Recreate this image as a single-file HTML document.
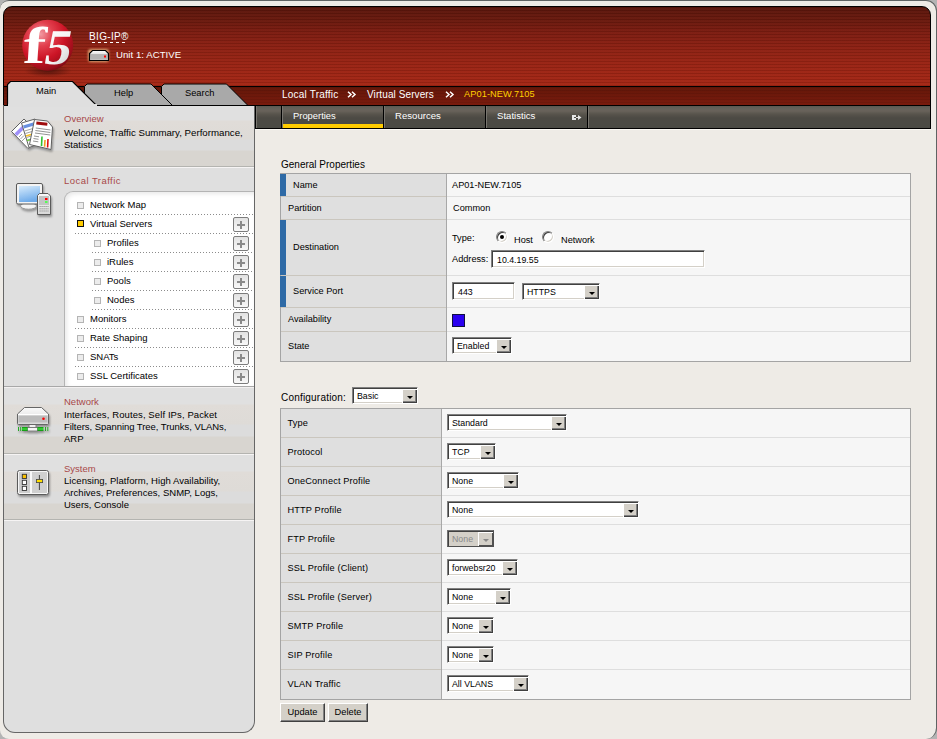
<!DOCTYPE html>
<html><head><meta charset="utf-8">
<style>
*{box-sizing:border-box;margin:0;padding:0}
html,body{width:937px;height:739px;overflow:hidden;background:#b4b4b4}
body{position:relative;font-family:"Liberation Sans",sans-serif;font-size:10px;color:#000}
.a{position:absolute}
.t{position:absolute;white-space:nowrap;line-height:12px}
#win{position:absolute;left:0;top:0;width:937px;height:739px;background:#eeebe6;border-top:1px solid #5f6363;border-right:1px solid #5f6363;border-radius:9px 11px 11px 9px}
#hdr{position:absolute;left:3px;top:6px;width:928px;height:123px;border:1px solid #000;border-radius:9px 9px 0 0;overflow:hidden;
 background:linear-gradient(#5a150b 0px,#6c190d 15px,#7c1c10 25px,#8c2012 40px,#982313 55px,#a52614 79px)}
#hdr .stripes{position:absolute;left:0;top:0;right:0;height:79px;background:repeating-linear-gradient(rgba(0,0,0,0.1) 0px,rgba(0,0,0,0.1) 1px,rgba(255,255,255,0.02) 1px,rgba(255,255,255,0.02) 3px)}
#band{position:absolute;left:0;top:79px;right:0;height:20px;border-top:1px solid #000;background:linear-gradient(#641709,#7a1b0e)}
#band .stripes2{position:absolute;left:0;top:0;right:0;bottom:0;background:repeating-linear-gradient(rgba(0,0,0,0.08) 0px,rgba(0,0,0,0.08) 1px,rgba(255,255,255,0) 1px,rgba(255,255,255,0) 3px)}
#gbar{position:absolute;left:0;top:98px;right:0;height:23px;border-top:1px solid #000;background:linear-gradient(#6b6760 0px,#625f58 5px,#4f4e48 9px,#4a4a44 22px)}
#side{position:absolute;left:3px;top:105px;width:252px;height:628px;background:#dfdfdf;border:1px solid #666;border-top:none;border-radius:0 0 12px 12px;overflow:hidden}
.plus{position:absolute;width:16px;height:15px;border:1px solid #7c7c7c;border-radius:2px;background:linear-gradient(#e2e2e2,#f8f8f8)}
.plus:before{content:"";position:absolute;left:3px;top:6px;width:8px;height:2px;background:#8a8a8a}
.plus:after{content:"";position:absolute;left:6px;top:3px;width:2px;height:8px;background:#8a8a8a}
.dot{position:absolute;height:1px;background:repeating-linear-gradient(90deg,#8c8c8c 0 1px,transparent 1px 3px)}
.sel,.inp{position:absolute;background:#fff;border:1px solid;border-color:#808080 #fff #fff #808080;box-shadow:inset 1px 1px 0 #404040,inset -1px -1px 0 #d4d0c8}
.sel span,.inp span{position:absolute;left:4px;top:2.5px;line-height:13px;white-space:nowrap}
.sel span{top:2px}
.inp span{left:5px}
.sel i{position:absolute;right:0;top:1px;bottom:0;width:15px;background:#d4d0c8;box-shadow:inset 1px 1px 0 #fff,inset -1px -1px 0 #404040,inset -2px -2px 0 #808080}
.sel i:after{content:"";position:absolute;left:4.5px;top:6.5px;border-left:3px solid transparent;border-right:3px solid transparent;border-top:3.5px solid #000}
.sel.dis{background:#d4d0c8;border-color:#707070 #505050 #505050 #707070;box-shadow:inset 1px 1px 0 #404040}
.sel.dis i{box-shadow:inset 1px 1px 0 #fff,inset -1px -1px 0 #505050}
.sel.dis span{color:#8a8a8a}
.sel.dis i:after{border-top-color:#8a8a8a}
.radio{position:absolute;width:12px;height:12px;border-radius:50%;background:#fff;border:1px solid;border-color:#808080 #fff #fff #808080;box-shadow:inset 1px 1px 0 #404040,inset -1px -1px 0 #d4d0c8}
.radio.on:after{content:"";position:absolute;left:3px;top:3px;width:4px;height:4px;border-radius:50%;background:#000}
.btn{position:absolute;height:19px;background:#d4d0c8;border:1px solid;border-color:#fff #404040 #404040 #fff;box-shadow:inset -1px -1px 0 #808080}
.btn span{position:absolute;left:0;right:0;top:2px;text-align:center;font-size:9.3px;line-height:12px}
</style></head><body>
<div id="win"></div>
<div id="hdr">
 <div class="stripes"></div>
 <div id="band"><div class="stripes2"></div></div>
 <div id="gbar"></div>
</div>
<div id="side"></div>


<!-- sidebar sections -->
<div class="a" style="left:4px;top:106px;width:250px;height:60px;background:linear-gradient(#e0e0e0 0px,#e0e0e0 14px,#e0dcd8 15px,#dedbd7 33px,#dcdcdc 34px,#dcdcdc 44px,#d8d5d0 45px,#d8d5d0 60px)"></div>
<div class="a" style="left:4px;top:166px;width:250px;height:1px;background:#b4b4b0"></div>
<div class="a" style="left:4px;top:167px;width:250px;height:1px;background:#f6f4f4"></div>
<div class="a" style="left:4px;top:386px;width:250px;height:1px;background:#a8a8a8"></div>
<div class="a" style="left:4px;top:387px;width:250px;height:1px;background:#f2f0f0"></div>
<div class="a" style="left:4px;top:388px;width:250px;height:65px;background:linear-gradient(#e0e0e0 0px,#e0e0e0 16px,#e0dcd8 17px,#dedbd7 36px,#dcdcdc 37px,#dcdcdc 48px,#d8d5d0 49px,#d8d5d0 65px)"></div>
<div class="a" style="left:4px;top:453px;width:250px;height:1px;background:#b4b4b0"></div>
<div class="a" style="left:4px;top:454px;width:250px;height:1px;background:#f6f4f4"></div>
<div class="a" style="left:4px;top:455px;width:250px;height:64px;background:linear-gradient(#e0e0e0 0px,#e0e0e0 16px,#e0dcd8 17px,#dedbd7 36px,#dcdcdc 37px,#dcdcdc 48px,#d8d5d0 49px,#d8d5d0 64px)"></div>
<div class="a" style="left:4px;top:519px;width:250px;height:1px;background:#b4b4b0"></div>
<div class="a" style="left:4px;top:520px;width:250px;height:1px;background:#f6f4f4"></div>

<div class="t" style="left:64px;top:113px;font-size:9.5px;color:#a84848">Overview</div>
<div class="t" style="left:64px;top:127px;font-size:9.7px">Welcome, Traffic Summary, Performance,</div>
<div class="t" style="left:64px;top:139px;font-size:9.5px">Statistics</div>

<div class="t" style="left:64px;top:175px;font-size:9.5px;color:#a84848;letter-spacing:0.45px">Local Traffic</div>
<div class="a" style="left:64px;top:191px;width:190px;height:195px;background:#fff;border-top:1px solid #b4b4b4;border-left:1px solid #b4b4b4;border-radius:9px 0 0 0;box-shadow:inset 2px 2px 4px rgba(0,0,0,0.09)"></div>

<div class="t" style="left:64px;top:396px;font-size:9.5px;color:#a84848">Network</div>
<div class="t" style="left:64px;top:409px;font-size:9.5px;letter-spacing:0.1px">Interfaces, Routes, Self IPs, Packet</div>
<div class="t" style="left:64px;top:421px;font-size:9.5px;letter-spacing:-0.05px">Filters, Spanning Tree, Trunks, VLANs,</div>
<div class="t" style="left:64px;top:433px;font-size:9.5px">ARP</div>

<div class="t" style="left:64px;top:463px;font-size:9.5px;color:#a84848">System</div>
<div class="t" style="left:64px;top:475px;font-size:9.5px;letter-spacing:0.05px">Licensing, Platform, High Availability,</div>
<div class="t" style="left:64px;top:487px;font-size:9.5px;letter-spacing:0.03px">Archives, Preferences, SNMP, Logs,</div>
<div class="t" style="left:64px;top:499px;font-size:9.5px">Users, Console</div>
<div class="a" style="left:77px;top:202px;width:7px;height:7px;border:1px solid #b4b4b4;background:#ececec"></div>
<div class="t" style="left:90px;top:199px;font-size:9.5px">Network Map</div>
<div class="dot" style="left:75px;top:214px;width:178px"></div>
<div class="a" style="left:77px;top:220px;width:7px;height:7px;border:1px solid #111;background:#ffcc00"></div>
<div class="t" style="left:90px;top:218px;font-size:9.5px">Virtual Servers</div>
<div class="plus" style="left:233px;top:217px"></div>
<div class="dot" style="left:75px;top:233px;width:178px"></div>
<div class="a" style="left:94px;top:240px;width:7px;height:7px;border:1px solid #b4b4b4;background:#ececec"></div>
<div class="t" style="left:107px;top:237px;font-size:9.5px">Profiles</div>
<div class="plus" style="left:233px;top:236px"></div>
<div class="dot" style="left:92px;top:252px;width:161px"></div>
<div class="a" style="left:94px;top:259px;width:7px;height:7px;border:1px solid #b4b4b4;background:#ececec"></div>
<div class="t" style="left:107px;top:256px;font-size:9.5px">iRules</div>
<div class="plus" style="left:233px;top:255px"></div>
<div class="dot" style="left:92px;top:271px;width:161px"></div>
<div class="a" style="left:94px;top:278px;width:7px;height:7px;border:1px solid #b4b4b4;background:#ececec"></div>
<div class="t" style="left:107px;top:275px;font-size:9.5px">Pools</div>
<div class="plus" style="left:233px;top:274px"></div>
<div class="dot" style="left:92px;top:290px;width:161px"></div>
<div class="a" style="left:94px;top:297px;width:7px;height:7px;border:1px solid #b4b4b4;background:#ececec"></div>
<div class="t" style="left:107px;top:294px;font-size:9.5px">Nodes</div>
<div class="plus" style="left:233px;top:293px"></div>
<div class="dot" style="left:92px;top:309px;width:161px"></div>
<div class="a" style="left:77px;top:316px;width:7px;height:7px;border:1px solid #b4b4b4;background:#ececec"></div>
<div class="t" style="left:90px;top:313px;font-size:9.5px">Monitors</div>
<div class="plus" style="left:233px;top:312px"></div>
<div class="dot" style="left:75px;top:328px;width:178px"></div>
<div class="a" style="left:77px;top:335px;width:7px;height:7px;border:1px solid #b4b4b4;background:#ececec"></div>
<div class="t" style="left:90px;top:332px;font-size:9.5px">Rate Shaping</div>
<div class="plus" style="left:233px;top:331px"></div>
<div class="dot" style="left:75px;top:347px;width:178px"></div>
<div class="a" style="left:77px;top:354px;width:7px;height:7px;border:1px solid #b4b4b4;background:#ececec"></div>
<div class="t" style="left:90px;top:351px;font-size:9.5px">SNATs</div>
<div class="plus" style="left:233px;top:350px"></div>
<div class="dot" style="left:75px;top:366px;width:178px"></div>
<div class="a" style="left:77px;top:373px;width:7px;height:7px;border:1px solid #b4b4b4;background:#ececec"></div>
<div class="t" style="left:90px;top:370px;font-size:9.5px">SSL Certificates</div>
<div class="plus" style="left:233px;top:369px"></div>


<!-- sidebar icons -->
<svg class="a" style="left:0;top:0" width="60" height="520" viewBox="0 0 60 520">
 <defs>
  <filter id="ds" x="-30%" y="-30%" width="160%" height="160%"><feGaussianBlur in="SourceAlpha" stdDeviation="1.2"/><feOffset dx="1" dy="1.5"/><feComponentTransfer><feFuncA type="linear" slope="0.35"/></feComponentTransfer><feMerge><feMergeNode/><feMergeNode in="SourceGraphic"/></feMerge></filter>
  <linearGradient id="scr" x1="0" y1="0" x2="0.3" y2="1"><stop offset="0" stop-color="#d8ecfc"/><stop offset="1" stop-color="#70acea"/></linearGradient>
  <linearGradient id="gry" x1="0" y1="0" x2="0" y2="1"><stop offset="0" stop-color="#fafafa"/><stop offset="1" stop-color="#d8d8d8"/></linearGradient>
  <linearGradient id="grn" x1="0" y1="0" x2="0" y2="1"><stop offset="0" stop-color="#0a8a0a"/><stop offset="0.5" stop-color="#40e040"/><stop offset="1" stop-color="#0a8a0a"/></linearGradient>
 </defs>
 <!-- overview -->
 <g filter="url(#ds)">
  <path d="M11.5 131.5 L24 119 L41 136 L28 148.5 Z" fill="#fff" stroke="#606060" stroke-width="1"/>
  <path d="M14.5 133.5 L23 125 L25.5 127.5 L17 136 Z" fill="#a090f8"/>
  <path d="M19 137 L22 134 M20.5 139 L24 135.5 M22 141 L25.5 137.5" stroke="#888" stroke-width="0.8"/>
  <path d="M21.5 123 L35 119 L42.5 143 L29 147.5 Z" fill="#fff" stroke="#606060" stroke-width="1"/>
  <path d="M23 125.5 L34 122.2 L35 125.2 L24 128.5 Z" fill="#6890e0"/>
  <path d="M24.5 131 L33 128.5 M25.2 133.5 L33.8 131 M26.5 137.5 L31 136 M27.5 141 L30.5 140" stroke="#999" stroke-width="0.9"/>
  <path d="M26 136 L31 134.5" stroke="#f8c020" stroke-width="1.4"/>
  <path d="M27 140.5 L30 139.5" stroke="#70d040" stroke-width="1.4"/>
  <path d="M34.5 119.5 L47.5 121 L52.5 127 L51 149.5 L29.5 144.5 Z" fill="#fff" stroke="#606060" stroke-width="1"/>
  <path d="M36.5 121.5 L47.5 122.8 L47.2 125.8 L36.2 124.5 Z" fill="#a01010"/>
  <path d="M35.8 128 L50.5 130 M35.4 130.5 L50.4 132.5 M35 133 L50.3 135 M34 136 L39 136.8 M33.5 138.5 L38.5 139.3 M33 141 L38.3 141.8" stroke="#777" stroke-width="0.8"/>
  <path d="M42 136.5 L41.5 146" stroke="#30c030" stroke-width="1.6"/>
  <path d="M45 140 L44.6 146.8" stroke="#f0a020" stroke-width="1.6"/>
  <path d="M48 139 L47.6 147.5" stroke="#e01010" stroke-width="1.6"/>
 </g>
 <!-- local traffic -->
 <g filter="url(#ds)">
  <ellipse cx="28.5" cy="206" rx="8" ry="3.2" fill="#f4f4f4" stroke="#888" stroke-width="0.8"/>
  <rect x="16.5" y="183.5" width="26" height="20.5" rx="1.5" fill="#f4f4f4" stroke="#5a5a5a" stroke-width="1"/>
  <rect x="19" y="186" width="21" height="16" fill="url(#scr)"/>
  <path d="M39.5 193.5 H48 L50.5 196 V214.5 H37.5 V195.5 Z" fill="url(#gry)" stroke="#5a5a5a" stroke-width="1"/>
  <rect x="39" y="196" width="10" height="9" fill="#c4c4c4"/>
  <rect x="45" y="198" width="2.5" height="2" fill="#f00"/>
  <rect x="45" y="201" width="2.5" height="2" fill="#5f5"/>
  <path d="M39.5 206.5 H48.5 M39.5 208.8 H48.5 M39.5 211 H48.5" stroke="#777" stroke-width="0.8" stroke-dasharray="1.2 0.8"/>
 </g>
 <!-- network -->
 <g filter="url(#ds)">
  <rect x="29" y="423" width="7" height="5" fill="#f0f0f0" stroke="#666" stroke-width="0.8"/>
  <rect x="27.5" y="427.5" width="10" height="3.5" fill="#f4f4f4" stroke="#666" stroke-width="0.8"/>
  <path d="M24.5 407.5 H41.5 L48.5 414 V423.5 Q48.5 424.5 47.5 424.5 H18.5 Q17.5 424.5 17.5 423.5 V414 Z" fill="url(#gry)" stroke="#666" stroke-width="1"/>
  <rect x="18.5" y="415.5" width="29" height="7" fill="#bcbcbc"/>
  <path d="M18 414.5 H48" stroke="#fff" stroke-width="1"/>
  <circle cx="43.5" cy="418.8" r="1.3" fill="#f00"/>
  <rect x="22" y="427" width="5.5" height="4" fill="url(#grn)"/>
  <rect x="37.5" y="427" width="6" height="4" fill="url(#grn)"/>
  <rect x="18" y="427" width="1" height="4" fill="#2a2"/>
  <rect x="20.2" y="427" width="1" height="4" fill="#2a2"/>
  <rect x="45" y="427" width="1" height="4" fill="#2a2"/>
  <rect x="47.3" y="427" width="1" height="4" fill="#2a2"/>
 </g>
 <!-- system -->
 <g filter="url(#ds)">
  <rect x="17.5" y="470.5" width="31" height="24" rx="2" fill="#f6f6f6" stroke="#5a5a5a" stroke-width="1"/>
  <rect x="19" y="472" width="11" height="21" fill="#cdcdcd"/>
  <rect x="32" y="472" width="15" height="21" fill="#d0d0d0"/>
  <path d="M31 471 V494" stroke="#f8f8f8" stroke-width="1.5"/>
  <rect x="22.3" y="474.3" width="4.2" height="4.2" fill="#f8c000" stroke="#333" stroke-width="0.9"/>
  <rect x="22.3" y="480.3" width="4.2" height="4.2" fill="#fff" stroke="#333" stroke-width="0.9"/>
  <rect x="22.3" y="486.3" width="4.2" height="4.2" fill="#fff" stroke="#333" stroke-width="0.9"/>
  <path d="M39.4 475 V490" stroke="#333" stroke-width="0.9"/>
  <rect x="36.4" y="479.4" width="6.2" height="3.2" fill="#ffe000" stroke="#444" stroke-width="0.8"/>
 </g>
</svg>

<!-- logo -->
<svg class="a" style="left:14px;top:14px" width="66" height="66" viewBox="0 0 66 66">
 <defs>
  <radialGradient id="lg" cx="0.36" cy="0.28" r="0.78">
   <stop offset="0" stop-color="#f29aa2"/>
   <stop offset="0.3" stop-color="#e2404e"/>
   <stop offset="0.62" stop-color="#cc1426"/>
   <stop offset="0.9" stop-color="#9a0e1a"/>
   <stop offset="1" stop-color="#700a12"/>
  </radialGradient>
  <linearGradient id="g5" x1="0" y1="0" x2="1" y2="1"><stop offset="0" stop-color="#fff"/><stop offset="0.55" stop-color="#f4f4f4"/><stop offset="1" stop-color="#c8c8c8"/></linearGradient>
  <radialGradient id="sh" cx="0.5" cy="0.5" r="0.5">
   <stop offset="0" stop-color="#000" stop-opacity="0.45"/>
   <stop offset="1" stop-color="#000" stop-opacity="0"/>
  </radialGradient>
 </defs>
 <ellipse cx="34" cy="57" rx="24" ry="6" fill="url(#sh)"/>
 <circle cx="33.7" cy="31.3" r="25.5" fill="url(#lg)"/>
 <text x="0" y="0" font-family="Liberation Serif" font-weight="bold" font-size="52" fill="#fff" transform="translate(8.5,49) scale(1.3,1) skewX(-3)">f</text><text x="0" y="0" font-family="Liberation Serif" font-weight="bold" font-size="50" fill="url(#g5)" transform="translate(28.5,49.5) scale(1.05,1) skewX(-11)">5</text>
</svg>
<div class="t" style="left:89px;top:31px;color:#fff;font-size:10px;letter-spacing:0.35px">BIG-IP&reg;</div>
<div class="a" style="left:92px;top:42px;width:36px;height:1px;background:repeating-linear-gradient(90deg,#fff 0 3px,transparent 3px 6px)"></div>
<svg class="a" style="left:86px;top:47px" width="26" height="17" viewBox="0 0 26 17">
 <defs><linearGradient id="sv" x1="0" y1="0" x2="0" y2="1"><stop offset="0" stop-color="#fff"/><stop offset="0.3" stop-color="#e8e8e8"/><stop offset="0.4" stop-color="#b8b8b8"/><stop offset="1" stop-color="#d0d0d0"/></linearGradient>
 <filter id="gl"><feGaussianBlur stdDeviation="1.2"/></filter></defs>
 <rect x="2" y="2" width="21" height="13" rx="3" fill="#f3c48a" opacity="0.8" filter="url(#gl)"/>
 <path d="M6.5 3.5 H19.5 L22.5 6.5 V13.5 H3.5 V6.5 Z" fill="url(#sv)" stroke="#000" stroke-width="1.2"/>
 <rect x="5" y="7.5" width="16" height="5" fill="#b4b4b4"/>
 <rect x="18" y="8.5" width="2" height="2" fill="#f00"/>
</svg>
<div class="t" style="left:116px;top:49px;color:#fff;font-size:9.6px;letter-spacing:0.05px">Unit 1: ACTIVE</div>

<!-- tabs -->
<svg class="a" style="left:0;top:78px" width="260" height="30" viewBox="0 78 260 30">
 <path d="M161.5 105 V86.5 L164 84 H226.5 L247.5 105" fill="#a9a9a9" stroke="#000" stroke-width="1"/>
 <path d="M84.5 105 V86.5 L87 84 H151 L172 105" fill="#a9a9a9" stroke="#000" stroke-width="1"/>
 <path d="M7.5 106 V84.5 L10.5 81.5 H72.5 L96.5 105.5 H260" fill="#dfdfdf" stroke="#000" stroke-width="1.2"/>
 <rect x="8" y="104" width="89" height="3" fill="#dfdfdf"/>
 <rect x="4" y="105" width="3.5" height="1" fill="#000"/>
</svg>
<div class="t" style="left:36px;top:85px;font-size:9.3px">Main</div>
<div class="t" style="left:114px;top:87px;font-size:9.3px">Help</div>
<div class="t" style="left:185px;top:87px;font-size:9.3px">Search</div>

<!-- breadcrumb -->
<div class="t" style="left:282px;top:89px;color:#fff;font-size:10px;letter-spacing:0.2px">Local Traffic</div>
<svg class="a" style="left:347px;top:91px" width="10" height="8" viewBox="0 0 10 8"><path d="M1 0.8 L4 3.5 L1 6.2 M5 0.8 L8 3.5 L5 6.2" fill="none" stroke="#fff" stroke-width="1.5"/></svg>
<div class="t" style="left:367px;top:89px;color:#fff;font-size:10px;letter-spacing:0.1px">Virtual Servers</div>
<svg class="a" style="left:445px;top:91px" width="10" height="8" viewBox="0 0 10 8"><path d="M1 0.8 L4 3.5 L1 6.2 M5 0.8 L8 3.5 L5 6.2" fill="none" stroke="#fff" stroke-width="1.5"/></svg>
<div class="t" style="left:464px;top:88px;color:#ffd000;font-size:9.2px;letter-spacing:0.1px">AP01-NEW.7105</div>

<!-- gray bar tabs -->
<div class="a" style="left:255px;top:105px;width:676px;height:24px;border:1px solid #000;background:linear-gradient(#58574f 0px,#605e57 1px,#65625b 3px,#69625a 5px,#5d5951 7px,#55514a 9px,#4c4a44 12px,#4a4a44 22px)"></div>
<div class="a" style="left:255px;top:129px;width:676px;height:1px;background:#faf8f4"></div>
<div class="a" style="left:256px;top:106px;width:1px;height:22px;background:#77746e"></div>
<div class="a" style="left:281px;top:106px;width:1px;height:22px;background:#000"></div>
<div class="a" style="left:282px;top:106px;width:1px;height:22px;background:#77746e"></div>
<div class="a" style="left:383px;top:106px;width:1px;height:22px;background:#000"></div>
<div class="a" style="left:384px;top:106px;width:1px;height:22px;background:#77746e"></div>
<div class="a" style="left:485px;top:106px;width:1px;height:22px;background:#000"></div>
<div class="a" style="left:486px;top:106px;width:1px;height:22px;background:#77746e"></div>
<div class="a" style="left:587px;top:106px;width:1px;height:22px;background:#000"></div>
<div class="a" style="left:588px;top:106px;width:1px;height:22px;background:#77746e"></div>
<div class="a" style="left:283px;top:124px;width:100px;height:4px;background:#ffcc00"></div>
<div class="t" style="left:293px;top:110px;color:#fff;font-size:9.4px">Properties</div>
<div class="t" style="left:395px;top:110px;color:#fff;font-size:9.6px">Resources</div>
<div class="t" style="left:497px;top:110px;color:#fff;font-size:9.6px">Statistics</div>
<svg class="a" style="left:571px;top:114px" width="11" height="7" viewBox="0 0 11 7"><rect x="1" y="1" width="4" height="5" fill="#e6e6e6"/><rect x="3" y="3" width="2" height="1" fill="#4e4c46"/><rect x="5" y="3" width="2.5" height="1" fill="#e6e6e6"/><path d="M7 1 L10.5 3.5 L7 6 Z" fill="#e6e6e6"/></svg>

<!--MAIN-->
<div class="t" style="left:281px;top:158.99px;font-size:10px">General Properties</div>
<div class="a" style="left:280px;top:173px;width:631px;height:189px;background:#f6f6f6;border:1px solid #a4a4a4"></div>
<div class="a" style="left:281px;top:174px;width:165px;height:187px;background:#dfdfdf"></div>
<div class="a" style="left:446px;top:174px;width:1px;height:187px;background:#a8a8a8"></div>
<div class="a" style="left:281px;top:196px;width:165px;height:1px;background:#cac6be"></div>
<div class="a" style="left:447px;top:196px;width:463px;height:1px;background:#dedede"></div>
<div class="a" style="left:281px;top:219px;width:165px;height:1px;background:#cac6be"></div>
<div class="a" style="left:447px;top:219px;width:463px;height:1px;background:#dedede"></div>
<div class="a" style="left:281px;top:275px;width:165px;height:1px;background:#cac6be"></div>
<div class="a" style="left:447px;top:275px;width:463px;height:1px;background:#dedede"></div>
<div class="a" style="left:281px;top:307px;width:165px;height:1px;background:#cac6be"></div>
<div class="a" style="left:447px;top:307px;width:463px;height:1px;background:#dedede"></div>
<div class="a" style="left:281px;top:331px;width:165px;height:1px;background:#cac6be"></div>
<div class="a" style="left:447px;top:331px;width:463px;height:1px;background:#dedede"></div>
<div class="a" style="left:280px;top:174px;width:6px;height:22px;background:#2e6aa6"></div>
<div class="a" style="left:280px;top:220px;width:6px;height:55px;background:#2e6aa6"></div>
<div class="a" style="left:280px;top:276px;width:6px;height:31px;background:#2e6aa6"></div>
<div class="t" style="left:293px;top:178.67px;font-size:9.2px">Name</div>
<div class="t" style="left:288px;top:201.67px;font-size:9.2px">Partition</div>
<div class="t" style="left:293px;top:240.67px;font-size:9.2px">Destination</div>
<div class="t" style="left:293px;top:284.67px;font-size:9.2px">Service Port</div>
<div class="t" style="left:288px;top:312.67px;font-size:9.2px">Availability</div>
<div class="t" style="left:288px;top:339.67px;font-size:9.2px">State</div>
<div class="t" style="left:452px;top:178.67px;font-size:9.2px">AP01-NEW.7105</div>
<div class="t" style="left:453px;top:201.67px;font-size:9.2px">Common</div>
<div class="t" style="left:452px;top:231.67px;font-size:9.2px">Type:</div>
<div class="radio on" style="left:496px;top:231px"></div>
<div class="t" style="left:514px;top:233.67px;font-size:9.2px">Host</div>
<div class="radio" style="left:542px;top:231px"></div>
<div class="t" style="left:561px;top:233.67px;font-size:9.2px">Network</div>
<div class="t" style="left:452px;top:252.67px;font-size:9.2px">Address:</div>
<div class="inp" style="left:491px;top:250px;width:214px;height:18px"><span style="font-size:8.8px">10.4.19.55</span></div>
<div class="inp" style="left:452px;top:282px;width:63px;height:18px"><span style="font-size:8.8px">443</span></div>
<div class="sel" style="left:522px;top:283px;width:78px;height:17px"><span style="font-size:8.8px">HTTPS</span><i></i></div>
<div class="a" style="left:452px;top:314px;width:13px;height:13px;background:#2a00f0;border:1px solid #101040"></div>
<div class="sel" style="left:452px;top:337px;width:60px;height:17px"><span style="font-size:8.8px">Enabled</span><i></i></div>
<div class="t" style="left:281px;top:391.99px;font-size:10px;letter-spacing:0.2px">Configuration:</div>
<div class="sel" style="left:352px;top:387px;width:66px;height:17px"><span style="font-size:8.8px">Basic</span><i></i></div>
<div class="a" style="left:280px;top:408px;width:631px;height:292px;background:#f6f6f6;border:1px solid #a4a4a4"></div>
<div class="a" style="left:281px;top:409px;width:160px;height:290px;background:#dfdfdf"></div>
<div class="a" style="left:441px;top:409px;width:1px;height:290px;background:#a8a8a8"></div>
<div class="t" style="left:287.5px;top:416.67px;font-size:9.2px;letter-spacing:0.15px">Type</div>
<div class="sel" style="left:447px;top:414px;width:120px;height:17px"><span style="font-size:8.8px">Standard</span><i></i></div>
<div class="a" style="left:281px;top:437px;width:160px;height:1px;background:#cac6be"></div>
<div class="a" style="left:442px;top:437px;width:468px;height:1px;background:#dedede"></div>
<div class="t" style="left:287.5px;top:445.67px;font-size:9.2px;letter-spacing:0.15px">Protocol</div>
<div class="sel" style="left:447px;top:443px;width:49px;height:17px"><span style="font-size:8.8px">TCP</span><i></i></div>
<div class="a" style="left:281px;top:466px;width:160px;height:1px;background:#cac6be"></div>
<div class="a" style="left:442px;top:466px;width:468px;height:1px;background:#dedede"></div>
<div class="t" style="left:287.5px;top:474.67px;font-size:9.2px;letter-spacing:0.15px">OneConnect Profile</div>
<div class="sel" style="left:447px;top:472px;width:72px;height:17px"><span style="font-size:8.8px">None</span><i></i></div>
<div class="a" style="left:281px;top:495px;width:160px;height:1px;background:#cac6be"></div>
<div class="a" style="left:442px;top:495px;width:468px;height:1px;background:#dedede"></div>
<div class="t" style="left:287.5px;top:503.67px;font-size:9.2px;letter-spacing:0.15px">HTTP Profile</div>
<div class="sel" style="left:447px;top:501px;width:192px;height:17px"><span style="font-size:8.8px">None</span><i></i></div>
<div class="a" style="left:281px;top:524px;width:160px;height:1px;background:#cac6be"></div>
<div class="a" style="left:442px;top:524px;width:468px;height:1px;background:#dedede"></div>
<div class="t" style="left:287.5px;top:532.67px;font-size:9.2px;letter-spacing:0.15px">FTP Profile</div>
<div class="sel dis" style="left:447px;top:530px;width:47px;height:17px"><span style="font-size:8.8px">None</span><i></i></div>
<div class="a" style="left:281px;top:553px;width:160px;height:1px;background:#cac6be"></div>
<div class="a" style="left:442px;top:553px;width:468px;height:1px;background:#dedede"></div>
<div class="t" style="left:287.5px;top:561.67px;font-size:9.2px;letter-spacing:0.15px">SSL Profile (Client)</div>
<div class="sel" style="left:447px;top:559px;width:71px;height:17px"><span style="font-size:8.8px">forwebsr20</span><i></i></div>
<div class="a" style="left:281px;top:582px;width:160px;height:1px;background:#cac6be"></div>
<div class="a" style="left:442px;top:582px;width:468px;height:1px;background:#dedede"></div>
<div class="t" style="left:287.5px;top:590.67px;font-size:9.2px;letter-spacing:0.15px">SSL Profile (Server)</div>
<div class="sel" style="left:447px;top:588px;width:64px;height:17px"><span style="font-size:8.8px">None</span><i></i></div>
<div class="a" style="left:281px;top:611px;width:160px;height:1px;background:#cac6be"></div>
<div class="a" style="left:442px;top:611px;width:468px;height:1px;background:#dedede"></div>
<div class="t" style="left:287.5px;top:619.67px;font-size:9.2px;letter-spacing:0.15px">SMTP Profile</div>
<div class="sel" style="left:447px;top:617px;width:47px;height:17px"><span style="font-size:8.8px">None</span><i></i></div>
<div class="a" style="left:281px;top:640px;width:160px;height:1px;background:#cac6be"></div>
<div class="a" style="left:442px;top:640px;width:468px;height:1px;background:#dedede"></div>
<div class="t" style="left:287.5px;top:648.67px;font-size:9.2px;letter-spacing:0.15px">SIP Profile</div>
<div class="sel" style="left:447px;top:646px;width:47px;height:17px"><span style="font-size:8.8px">None</span><i></i></div>
<div class="a" style="left:281px;top:669px;width:160px;height:1px;background:#cac6be"></div>
<div class="a" style="left:442px;top:669px;width:468px;height:1px;background:#dedede"></div>
<div class="t" style="left:287.5px;top:677.67px;font-size:9.2px;letter-spacing:0.15px">VLAN Traffic</div>
<div class="sel" style="left:447px;top:675px;width:82px;height:17px"><span style="font-size:8.8px">All VLANS</span><i></i></div>
<div class="btn" style="left:280px;top:703px;width:45px"><span>Update</span></div>
<div class="btn" style="left:328px;top:703px;width:40px"><span>Delete</span></div>
<!--/MAIN-->
</body></html>
